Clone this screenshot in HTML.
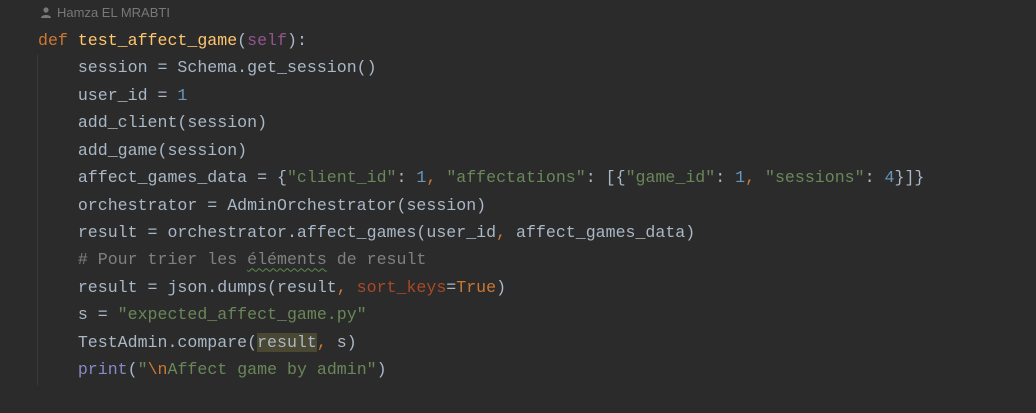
<!DOCTYPE html>
<html><head><meta charset="utf-8"><style>
html,body{margin:0;padding:0;background:#2b2b2b;width:1036px;height:413px;overflow:hidden}
.auth{position:absolute;left:40px;top:5px;font:13px "Liberation Sans",sans-serif;color:#787878}
.guide{position:absolute;left:37px;top:55px;width:1px;height:330px;background:#3b3b3b}
pre{position:absolute;left:38px;top:27px;margin:0;font:16.6px/27.42px "Liberation Mono","DejaVu Sans Mono",monospace;color:#a9b7c6}
.k{color:#cc7832}.f{color:#ffc66d}.s{color:#94558d}.n{color:#6897bb}.g{color:#6a8759}.c{color:#808080}.a{color:#aa4926}.b{color:#8888c6}
.h{background:#4a4733}.w{text-decoration:underline wavy #5f8b4a;text-underline-offset:3px;text-decoration-thickness:1px}
</style></head><body>
<div class="auth"><svg width="12" height="11" viewBox="0 0 12 11" style="vertical-align:-1px;margin-right:5px"><circle cx="6" cy="3" r="2.6" fill="#787878"/><path d="M1 11 C1 7 11 7 11 11Z" fill="#787878"/></svg>Hamza EL MRABTI</div>
<div class="guide"></div>
<pre><span class="k">def</span> <span class="f">test_affect_game</span>(<span class="s">self</span>):
    session = Schema.get_session()
    user_id = <span class="n">1</span>
    add_client(session)
    add_game(session)
    affect_games_data = {<span class="g">"client_id"</span>: <span class="n">1</span><span class="k">, </span><span class="g">"affectations"</span>: [{<span class="g">"game_id"</span>: <span class="n">1</span><span class="k">, </span><span class="g">"sessions"</span>: <span class="n">4</span>}]}
    orchestrator = AdminOrchestrator(session)
    result = orchestrator.affect_games(user_id<span class="k">, </span>affect_games_data)
    <span class="c"># Pour trier les <span class="w">éléments</span> de result</span>
    result = json.dumps(result<span class="k">, </span><span class="a">sort_keys</span>=<span class="k">True</span>)
    s = <span class="g">"expected_affect_game.py"</span>
    TestAdmin.compare(<span class="h">result</span><span class="k">, </span>s)
    <span class="b">print</span>(<span class="g">"<span class="k">\n</span>Affect game by admin"</span>)</pre>
</body></html>
